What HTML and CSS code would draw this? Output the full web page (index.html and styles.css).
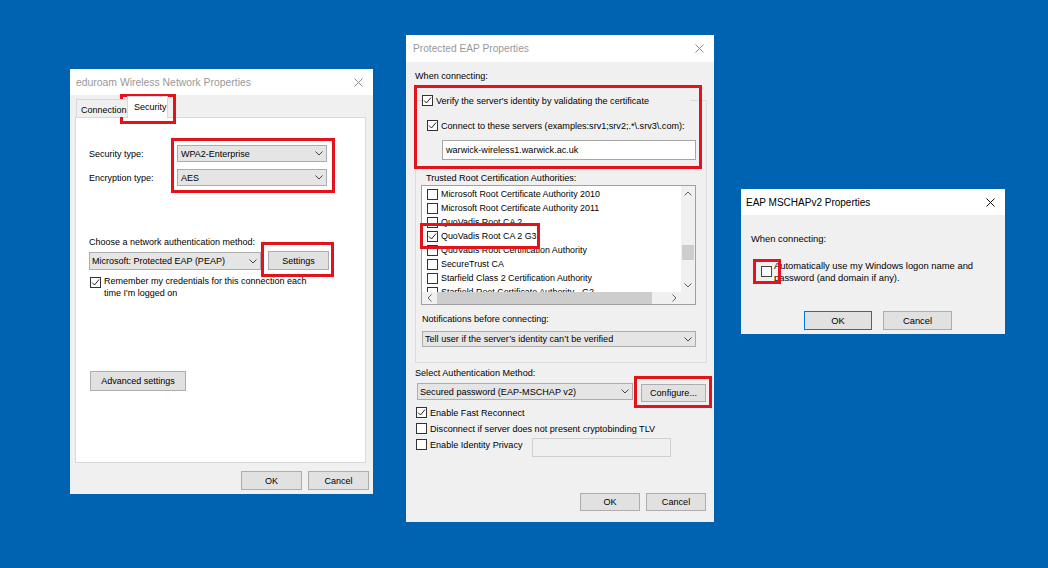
FILE: index.html
```html
<!DOCTYPE html>
<html lang="en">
<head>
<meta charset="utf-8">
<title>Wireless properties</title>
<link rel="stylesheet" href="styles.css">
</head>
<body>
<div class="desktop">

  <!-- eduroam Wireless Network Properties -->
  <div class="win win-wlan">
    <div class="titlebar tb-wlan inactive">
      <span class="title">eduroam Wireless Network Properties</span>
      <svg class="close" width="9" height="9" viewBox="0 0 9 9"><path d="M0.5 0.5L8.5 8.5M8.5 0.5L0.5 8.5"/></svg>
    </div>
    <div class="wbody wlan-body">
      <div class="tabs">
        <div class="tab tab-conn">Connection</div>
        <div class="tab tab-active">Security</div>
      </div>
      <div class="panel">
        <div class="form-row">
          <span class="row-label">Security type:</span>
          <div class="select sel-type"><span>WPA2-Enterprise</span><svg class="chev" width="8" height="5" viewBox="0 0 8 5"><path d="M0.5 0.5L4 4L7.5 0.5"/></svg></div>
        </div>
        <div class="form-row row-enc">
          <span class="row-label">Encryption type:</span>
          <div class="select sel-type"><span>AES</span><svg class="chev" width="8" height="5" viewBox="0 0 8 5"><path d="M0.5 0.5L4 4L7.5 0.5"/></svg></div>
        </div>
        <div class="lbl choose">Choose a network authentication method:</div>
        <div class="method-row">
          <div class="select sel-method"><span>Microsoft: Protected EAP (PEAP)</span><svg class="chev" width="8" height="5" viewBox="0 0 8 5"><path d="M0.5 0.5L4 4L7.5 0.5"/></svg></div>
          <div class="btn btn-settings">Settings</div>
        </div>
        <div class="remember-row">
          <span class="cb remember-cb"><svg width="9" height="9" viewBox="0 0 9 9"><path d="M1 4.5L3.5 7L8 1.5"/></svg></span>
          <span class="remember-text">Remember my credentials for this connection each<br>time I'm logged on</span>
        </div>
        <div class="btn btn-advanced">Advanced settings</div>
      </div>
      <div class="footer wlan-footer">
        <div class="btn btn-wlan">OK</div>
        <div class="btn btn-wlan">Cancel</div>
      </div>
    </div>
    <div class="hl hl-tab"></div>
    <div class="hl hl-types"></div>
    <div class="hl hl-settings"></div>
  </div>

  <!-- Protected EAP Properties -->
  <div class="win win-peap">
    <div class="titlebar tb-peap inactive">
      <span class="title">Protected EAP Properties</span>
      <svg class="close" width="9" height="9" viewBox="0 0 9 9"><path d="M0.5 0.5L8.5 8.5M8.5 0.5L0.5 8.5"/></svg>
    </div>
    <div class="wbody peap-body">
      <div class="lbl when">When connecting:</div>
      <div class="group">
        <div class="legend">
          <span class="cb"><svg width="9" height="9" viewBox="0 0 9 9"><path d="M1 4.5L3.5 7L8 1.5"/></svg></span>
          <span class="cb-text">Verify the server's identity by validating the certificate</span>
        </div>
        <div class="cbrow servers-row">
          <span class="cb"><svg width="9" height="9" viewBox="0 0 9 9"><path d="M1 4.5L3.5 7L8 1.5"/></svg></span>
          <span class="cb-text">Connect to these servers (examples:srv1;srv2;.*\.srv3\.com):</span>
        </div>
        <div class="textbox servers-input">warwick-wireless1.warwick.ac.uk</div>
        <div class="lbl trusted">Trusted Root Certification Authorities:</div>
        <div class="certlist">
          <div class="items">
            <div class="item"><span class="cb"></span><span class="item-text">Microsoft Root Certificate Authority 2010</span></div>
            <div class="item"><span class="cb"></span><span class="item-text">Microsoft Root Certificate Authority 2011</span></div>
            <div class="item"><span class="cb"></span><span class="item-text">QuoVadis Root CA 2</span></div>
            <div class="item"><span class="cb"><svg width="9" height="9" viewBox="0 0 9 9"><path d="M1 4.5L3.5 7L8 1.5"/></svg></span><span class="item-text">QuoVadis Root CA 2 G3</span></div>
            <div class="item"><span class="cb"></span><span class="item-text">QuoVadis Root Certification Authority</span></div>
            <div class="item"><span class="cb"></span><span class="item-text">SecureTrust CA</span></div>
            <div class="item"><span class="cb"></span><span class="item-text">Starfield Class 2 Certification Authority</span></div>
            <div class="item"><span class="cb"></span><span class="item-text">Starfield Root Certificate Authority - G2</span></div>
          </div>
          <div class="vscroll">
            <div class="sb-arrow"><svg width="8" height="5" viewBox="0 0 8 5"><path d="M0.5 4.5L4 1L7.5 4.5"/></svg></div>
            <div class="vtrack"><div class="vthumb"></div></div>
            <div class="sb-arrow"><svg width="8" height="5" viewBox="0 0 8 5"><path d="M0.5 0.5L4 4L7.5 0.5"/></svg></div>
          </div>
          <div class="hscroll">
            <div class="sb-arrow"><svg width="5" height="8" viewBox="0 0 5 8"><path d="M4.5 0.5L1 4L4.5 7.5"/></svg></div>
            <div class="htrack"><div class="hthumb"></div></div>
            <div class="sb-arrow"><svg width="5" height="8" viewBox="0 0 5 8"><path d="M0.5 0.5L4 4L0.5 7.5"/></svg></div>
          </div>
          <div class="corner"></div>
        </div>
        <div class="lbl notif">Notifications before connecting:</div>
        <div class="select sel-notif"><span>Tell user if the server’s identity can’t be verified</span><svg class="chev" width="8" height="5" viewBox="0 0 8 5"><path d="M0.5 0.5L4 4L7.5 0.5"/></svg></div>
      </div>
      <div class="lbl auth">Select Authentication Method:</div>
      <div class="auth-row">
        <div class="select sel-auth"><span>Secured password (EAP-MSCHAP v2)</span><svg class="chev" width="8" height="5" viewBox="0 0 8 5"><path d="M0.5 0.5L4 4L7.5 0.5"/></svg></div>
        <div class="btn btn-configure">Configure...</div>
      </div>
      <div class="cbrow opt-row first-opt">
        <span class="cb"><svg width="9" height="9" viewBox="0 0 9 9"><path d="M1 4.5L3.5 7L8 1.5"/></svg></span>
        <span class="cb-text">Enable Fast Reconnect</span>
      </div>
      <div class="cbrow opt-row">
        <span class="cb"></span>
        <span class="cb-text">Disconnect if server does not present cryptobinding TLV</span>
      </div>
      <div class="privacy-row">
        <div class="cbrow privacy-label">
          <span class="cb"></span>
          <span class="cb-text">Enable Identity Privacy</span>
        </div>
        <div class="textbox disabled-input"></div>
      </div>
      <div class="footer peap-footer">
        <div class="btn btn-peap">OK</div>
        <div class="btn btn-peap">Cancel</div>
      </div>
    </div>
    <div class="hl hl-verify"></div>
    <div class="hl hl-quo"></div>
    <div class="hl hl-config"></div>
  </div>

  <!-- EAP MSCHAPv2 Properties -->
  <div class="win win-mschap">
    <div class="titlebar tb-mschap">
      <span class="title">EAP MSCHAPv2 Properties</span>
      <svg class="close" width="9" height="9" viewBox="0 0 9 9"><path d="M0.5 0.5L8.5 8.5M8.5 0.5L0.5 8.5"/></svg>
    </div>
    <div class="wbody mschap-body">
      <div class="lbl mschap-when">When connecting:</div>
      <div class="auto-row">
        <span class="cb auto-cb"></span>
        <span class="auto-text">Automatically use my Windows logon name and<br>password (and domain if any).</span>
      </div>
      <div class="footer mschap-footer">
        <div class="btn btn-mschap btn-default">OK</div>
        <div class="btn btn-mschap btn-cancel">Cancel</div>
      </div>
    </div>
    <div class="hl hl-auto"></div>
  </div>

</div>
</body>
</html>
```

FILE: styles.css
```css
* { box-sizing: border-box; }

html, body {
  margin: 0;
  padding: 0;
}

body {
  background: #0063b1;
  font-family: "Liberation Sans", Arial, sans-serif;
  font-size: 9px;
  color: #000;
}

.desktop {
  position: relative;
  width: 1048px;
  height: 568px;
  overflow: hidden;
}

/* ---------- windows ---------- */
.win {
  position: absolute;
  background: #f0f0f0;
  display: flex;
  flex-direction: column;
}

.win-wlan { left: 70px; top: 69px; width: 303px; height: 425px; font-size: 9px; }
.win-peap { left: 406px; top: 35px; width: 308px; height: 487px; font-size: 9.1px; }
.win-mschap { left: 741px; top: 189px; width: 264px; height: 145px; font-size: 9.4px; }

.titlebar {
  display: flex;
  align-items: center;
  background: #fff;
  flex: none;
}
.tb-wlan { height: 26px; padding-left: 6px; font-size: 10.4px; }
.tb-peap { height: 27px; padding-left: 7px; font-size: 10.2px; }
.tb-mschap { height: 26px; padding-left: 5px; font-size: 10px; }

.titlebar .title { color: #000; }
.titlebar.inactive .title { color: #999; }

.close {
  margin-left: auto;
  margin-right: 10px;
  fill: none;
  stroke: #111;
  stroke-width: 1;
}
.inactive .close { stroke: #8a8a8a; }

.wbody {
  flex: 1;
  display: flex;
  flex-direction: column;
  min-height: 0;
}

.lbl { line-height: 12px; white-space: nowrap; }

/* ---------- common controls ---------- */
.cb {
  flex: none;
  width: 11px;
  height: 11px;
  border: 1px solid #333;
  background: #fff;
  display: flex;
  align-items: center;
  justify-content: center;
}
.cb svg { fill: none; stroke: #222; stroke-width: 1; }

.cbrow {
  display: flex;
  align-items: center;
  height: 11px;
  white-space: nowrap;
}
.cb-text { margin-left: 3px; }

.select {
  display: flex;
  align-items: center;
  justify-content: space-between;
  background: #e5e5e5;
  border: 1px solid #acacac;
  padding: 0 3px 0 2px;
  white-space: nowrap;
  overflow: hidden;
}
.chev { flex: none; fill: none; stroke: #444; stroke-width: 1; }

.btn {
  display: flex;
  align-items: center;
  justify-content: center;
  background: #e1e1e1;
  border: 1px solid #adadad;
  white-space: nowrap;
  flex: none;
}

.textbox {
  background: #fff;
  border: 1px solid #a6a6a6;
  display: flex;
  align-items: center;
  white-space: nowrap;
}

.footer {
  display: flex;
  margin-top: auto;
}

.hl {
  position: absolute;
  border: 3px solid #e3121b;
  pointer-events: none;
}

/* ---------- window 1 ---------- */
.wlan-body { padding: 0 4px 4px 5px; }

.tabs {
  display: flex;
  align-items: flex-end;
  height: 23px;
  padding-left: 1px;
  margin-bottom: -1px;
  position: relative;
  z-index: 1;
}
.tab {
  display: flex;
  align-items: center;
  white-space: nowrap;
  border: 1px solid #d9d9d9;
  border-bottom: none;
}
.tab-conn {
  width: 51px;
  height: 18px;
  margin-bottom: 1px;
  padding: 2px 0 0 4px;
  background: #f0f0f0;
  border-right: none;
}
.tab-active {
  width: 41px;
  height: 22px;
  padding: 0 0 1px 6px;
  background: #fff;
}

.panel {
  flex: 1;
  margin-right: 3px;
  background: #fff;
  border: 1px solid #d9d9d9;
  padding: 27px 0 0 13px;
  display: flex;
  flex-direction: column;
  align-items: flex-start;
}

.form-row {
  display: flex;
  align-items: center;
  height: 17px;
}
.row-enc { margin-top: 7px; }
.row-label { width: 88px; white-space: nowrap; }
.sel-type { width: 150px; height: 17px; padding-left: 3px; }

.choose { margin-top: 51px; line-height: 11px; }

.method-row {
  display: flex;
  align-items: flex-end;
  margin-top: 3px;
}
.sel-method { width: 172px; height: 18px; }
.btn-settings { width: 61px; height: 19px; margin-left: 7px; }

.remember-row {
  display: flex;
  align-items: flex-start;
  margin-top: 5px;
}
.remember-cb { margin: 2px 0 0 1px; }
.remember-text { margin-left: 3px; line-height: 12px; white-space: nowrap; }

.btn-advanced { width: 96px; height: 20px; margin: 72px 0 0 1px; }

.wlan-footer {
  justify-content: flex-end;
  gap: 6px;
  margin-top: 8px;
}
.btn-wlan { width: 61px; height: 19px; }

.hl-tab { left: 50px; top: 25px; width: 56px; height: 30px; }
.hl-types { left: 101px; top: 69px; width: 164px; height: 55px; }
.hl-settings { left: 191px; top: 173px; width: 73px; height: 35px; }

/* ---------- window 2 ---------- */
.peap-body { padding: 0 8px 11px 9px; align-items: flex-start; }

.when { margin-top: 8px; }

.group {
  margin-top: 18px;
  width: 292px;
  border: 1px solid #dcdcdc;
  padding-bottom: 15px;
  display: flex;
  flex-direction: column;
  align-items: flex-start;
}

.legend {
  display: flex;
  align-items: center;
  height: 11px;
  width: 268px;
  margin: -6px 0 0 6px;
  background: #f0f0f0;
  white-space: nowrap;
}

.servers-row { margin: 14px 0 0 11px; }

.servers-input {
  margin: 9px 0 0 26px;
  width: 254px;
  height: 20px;
  padding-left: 3px;
}

.trusted { margin: 12px 0 0 10px; }

.certlist {
  margin: 1px 0 0 5px;
  width: 275px;
  height: 120px;
  border: 1px solid #a0a0a0;
  background: #fff;
  display: grid;
  grid-template-columns: 1fr 14px;
  grid-template-rows: 1fr 12px;
  overflow: hidden;
}

.items {
  overflow: hidden;
  padding-top: 1px;
}
.item {
  display: flex;
  align-items: center;
  height: 14px;
  padding-left: 5px;
  white-space: nowrap;
  font-size: 8.9px;
}
.item-text { margin-left: 3px; }

.vscroll {
  display: flex;
  flex-direction: column;
  background: #f0f0f0;
}
.sb-arrow {
  flex: none;
  width: 14px;
  height: 14px;
  display: flex;
  align-items: center;
  justify-content: center;
}
.sb-arrow svg { fill: none; stroke: #606060; stroke-width: 1; }
.vtrack { flex: 1; }
.vthumb { margin-top: 45px; height: 15px; background: #cdcdcd; margin-left: 1px; width: 12px; }

.hscroll {
  display: flex;
  align-items: center;
  background: #f0f0f0;
}
.hscroll .sb-arrow { height: 12px; }
.htrack { flex: 1; height: 12px; }
.hthumb { margin-left: 1px; width: 215px; height: 12px; background: #cdcdcd; }

.corner { background: #f0f0f0; }

.notif { margin: 8px 0 0 6px; }
.sel-notif { margin: 6px 0 0 6px; width: 274px; height: 16px; }

.auth { margin-top: 4px; }

.auth-row {
  display: flex;
  align-items: flex-start;
  margin-top: 4px;
}
.sel-auth { margin-left: 2px; width: 216px; height: 17px; }
.btn-configure { margin: 1px 0 0 8px; width: 65px; height: 18px; }

.opt-row { margin: 5px 0 0 1px; }
.first-opt { margin-top: 5px; }

.privacy-row {
  display: flex;
  align-items: flex-start;
  margin-top: 4px;
}
.privacy-label { width: 117px; margin-top: 1px; padding-left: 1px; }
.disabled-input {
  width: 139px;
  height: 19px;
  background: #f0f0f0;
  border-color: #cfcfcf;
}

.peap-footer {
  align-self: stretch;
  justify-content: flex-end;
  gap: 6px;
}
.btn-peap { width: 60px; height: 18px; }

.hl-verify { left: 8px; top: 50px; width: 288px; height: 84px; }
.hl-quo { left: 14px; top: 188px; width: 120px; height: 26px; }
.hl-config { left: 228px; top: 341px; width: 78px; height: 32px; }

/* ---------- window 3 ---------- */
.mschap-body { padding: 0 0 4px 0; }

.mschap-when { margin: 18px 0 0 10px; }

.auto-row {
  display: flex;
  align-items: center;
  margin: 15px 0 0 20px;
}
.auto-cb { border-color: #444; }
.auto-text { margin-left: 2px; line-height: 11.5px; white-space: nowrap; }

.mschap-footer {
  padding-left: 63px;
  gap: 11px;
}
.btn-mschap { height: 19px; }
.btn-default { width: 68px; border-color: #0078d7; }
.btn-cancel { width: 69px; }

.hl-auto { left: 12px; top: 70px; width: 28px; height: 25px; }
```
